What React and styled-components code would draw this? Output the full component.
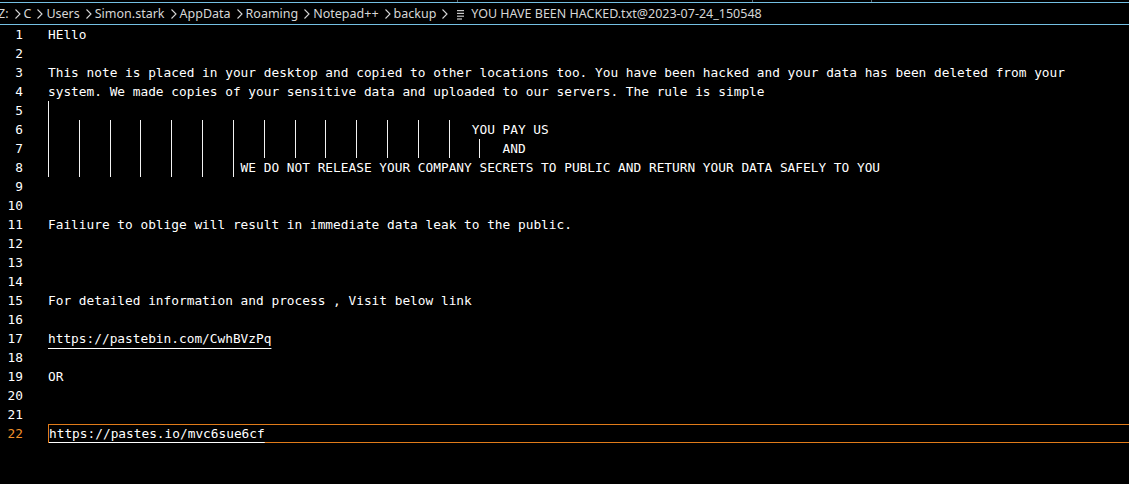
import React from "react";
import styled, { createGlobalStyle } from "styled-components";

const GlobalStyle = createGlobalStyle`
  html, body {
    margin: 0;
    padding: 0;
    background: #000;
  }
  body {
    width: 1129px;
    height: 484px;
    overflow: hidden;
  }
`;

const lines = [
  { text: "HEllo" },
  { text: "" },
  {
    text: "This note is placed in your desktop and copied to other locations too. You have been hacked and your data has been deleted from your",
  },
  {
    text: "system. We made copies of your sensitive data and uploaded to our servers. The rule is simple",
  },
  { indent: 1, text: "" },
  { indent: 55, text: "YOU PAY US" },
  { indent: 59, text: "AND" },
  {
    indent: 25,
    text: "WE DO NOT RELEASE YOUR COMPANY SECRETS TO PUBLIC AND RETURN YOUR DATA SAFELY TO YOU",
  },
  { text: "" },
  { text: "" },
  { text: "Failiure to oblige will result in immediate data leak to the public." },
  { text: "" },
  { text: "" },
  { text: "" },
  { text: "For detailed information and process , Visit below link" },
  { text: "" },
  { link: "https://pastebin.com/CwhBVzPq" },
  { text: "" },
  { text: "OR" },
  { text: "" },
  { text: "" },
  { link: "https://pastes.io/mvc6sue6cf", current: true },
];

const crumbs = [
  "Z:",
  "C",
  "Users",
  "Simon.stark",
  "AppData",
  "Roaming",
  "Notepad++",
  "backup",
];

const Page = styled.div`
  width: 1129px;
  height: 484px;
  background: #000;
  display: flex;
  flex-direction: column;
  overflow: hidden;
`;

const TabEdges = styled.div`
  display: flex;
  height: 2px;
`;

const TabEdge = styled.div`
  width: ${(p) => p.$w}px;
  border-right: 1px solid #5a6b76;
  flex-shrink: 0;
`;

const Breadcrumbs = styled.div`
  display: flex;
  align-items: center;
  height: 21px;
  border-top: 1px solid #74bfe2;
  border-bottom: 1px solid #74bfe2;
  margin-left: -2px;
  font-family: "Noto Sans", "Open Sans", sans-serif;
  font-size: 12.5px;
  color: #d6d6d6;
  white-space: nowrap;
`;

const Crumb = styled.span`
  display: inline-flex;
  align-items: center;
`;

const Chevron = styled.svg`
  width: 8px;
  height: 12px;
  margin: 0 2px 0 5px;
`;

const FileIcon = styled.svg`
  width: 10px;
  height: 12px;
  margin: 0 5px 0 5px;
`;

const Editor = styled.div`
  display: flex;
  flex-direction: column;
  font-family: "DejaVu Sans Mono", "Liberation Mono", monospace;
  font-size: 12.8px;
  color: #fff;
`;

const Row = styled.div`
  display: flex;
  height: 19px;
  line-height: 19px;
`;

const LineNo = styled.div`
  width: 23px;
  padding-right: 25px;
  text-align: right;
  flex-shrink: 0;
  color: ${(p) => (p.$current ? "#f0902a" : "#fff")};
`;

const Content = styled.div`
  flex: 1;
  display: flex;
  white-space: pre;
  box-sizing: border-box;
  border: ${(p) => (p.$current ? "1px solid #e07b1a" : "none")};
  border-right: none;
  line-height: ${(p) => (p.$current ? "17px" : "19px")};
`;

const Indent = styled.span`
  display: inline-block;
  height: 100%;
  flex-shrink: 0;
  background-image: repeating-linear-gradient(
    to right,
    #f2f2f2 0,
    #f2f2f2 1px,
    transparent 1px,
    transparent 4ch
  );
`;

const Link = styled.span`
  text-decoration: underline;
  text-decoration-color: #fff;
  text-underline-offset: ${(p) => (p.$current ? "4px" : "5px")};
  text-decoration-thickness: 1px;
`;

const App = () => (
  <>
    <GlobalStyle />
    <Page>
      <TabEdges>
        <TabEdge $w={457} />
        <TabEdge $w={294} />
        <TabEdge $w={118} />
      </TabEdges>
      <Breadcrumbs>
        {crumbs.map((c) => (
          <Crumb key={c}>
            {c}
            <Chevron viewBox="0 0 8 12">
              <path
                d="M1.5 1.5 L6 6 L1.5 10.5"
                fill="none"
                stroke="#d6d6d6"
                strokeWidth="1.1"
              />
            </Chevron>
          </Crumb>
        ))}
        <FileIcon viewBox="0 0 10 12">
          <rect x="1" y="2" width="7" height="1.2" fill="#c8c8c8" />
          <rect x="1" y="4.8" width="7" height="1.2" fill="#c8c8c8" />
          <rect x="1" y="7.6" width="7" height="1.2" fill="#c8c8c8" />
          <rect x="1" y="10.4" width="5" height="1.2" fill="#c8c8c8" />
        </FileIcon>
        <Crumb>YOU HAVE BEEN HACKED.txt@2023-07-24_150548</Crumb>
      </Breadcrumbs>
      <Editor>
        {lines.map((l, i) => (
          <Row key={i}>
            <LineNo $current={l.current}>{i + 1}</LineNo>
            <Content $current={l.current}>
              {l.indent ? <Indent style={{ width: `${l.indent}ch` }} /> : null}
              {l.link ? <Link $current={l.current}>{l.link}</Link> : l.text}
            </Content>
          </Row>
        ))}
      </Editor>
    </Page>
  </>
);

export default App;
